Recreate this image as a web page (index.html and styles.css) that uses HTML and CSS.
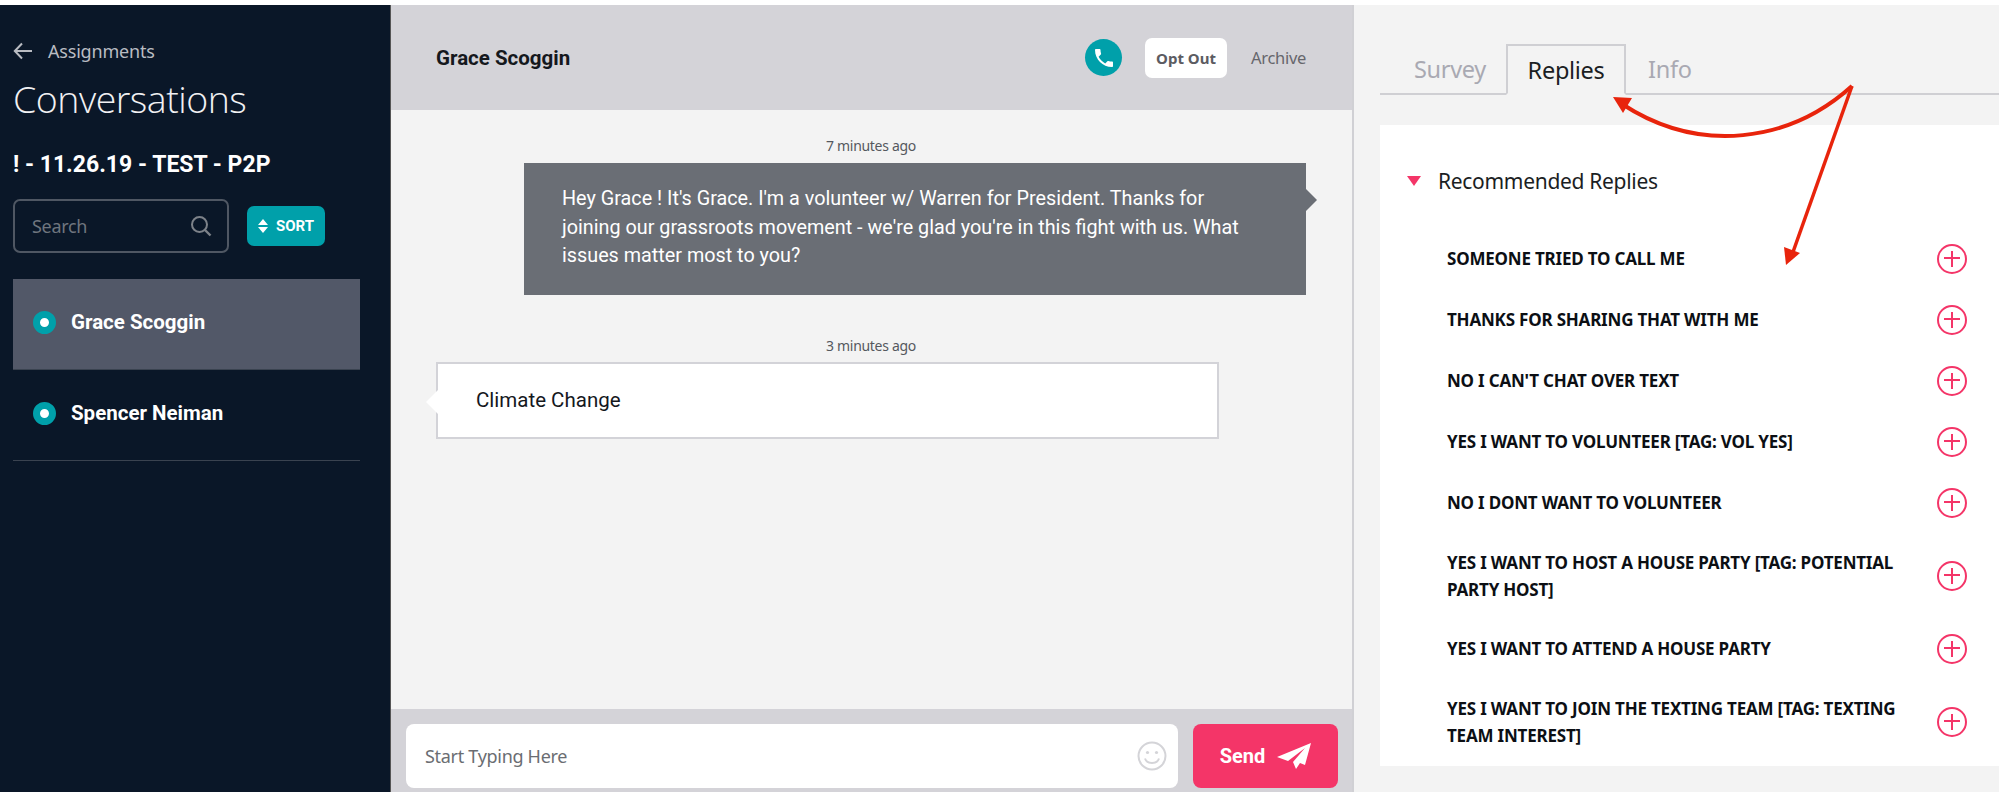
FILE: index.html
```html
<!DOCTYPE html>
<html lang="en">
<head>
    <meta charset="UTF-8">
    <title>Conversations</title>
    <link rel="stylesheet" href="styles.css">
</head>
<body>

<div class="app">
    <aside class="sidebar">
        <a class="back-link">
            <svg class="back-icon" viewBox="0 0 20 18"><path d="M19 9H2M9 1.500L1.800 9L9 16.500" fill="none" stroke="#b9bcc2" stroke-width="2"/></svg>
            <span>Assignments</span>
        </a>
        <h1 class="page-title">Conversations</h1>
        <h2 class="campaign">! - 11.26.19 - TEST - P2P</h2>
        <div class="search-row">
            <div class="search-box">
                <span>Search</span>
                <svg class="search-icon" viewBox="0 0 22 22"><circle cx="9.500" cy="9.500" r="7.500" fill="none" stroke="#7d8289" stroke-width="2"/><path d="M15 15l5.500 5.500" stroke="#7d8289" stroke-width="2.400"/></svg>
            </div>
            <button class="sort-btn">
                <svg class="sort-icon" viewBox="0 0 10 14"><path d="M5 0l5 6H0zM5 14L0 8h10z" fill="#fff"/></svg>
                SORT
            </button>
        </div>
        <div class="contact active"><span class="dot"></span>Grace Scoggin</div>
        <div class="contact"><span class="dot"></span>Spencer Neiman</div>
    </aside>

    <main class="chat">
        <header class="chat-header">
            <div class="chat-name">Grace Scoggin</div>
            <div class="call-btn">
                <svg viewBox="0 0 24 24" class="call-icon"><path d="M6.620 10.790c1.440 2.830 3.760 5.140 6.590 6.590l2.200-2.200c.27-.27.67-.36 1.020-.24 1.120.37 2.330.57 3.570.57.55 0 1 .45 1 1V20c0 .55-.45 1-1 1-9.390 0-17-7.610-17-17 0-.55.45-1 1-1h3.500c.55 0 1 .45 1 1 0 1.250.2 2.450.57 3.570.11.35.03.74-.25 1.020l-2.200 2.200z" fill="#fff"/></svg>
            </div>
            <button class="opt-out">Opt Out</button>
            <span class="archive">Archive</span>
        </header>

        <div class="messages">
            <div class="timestamp">7 minutes ago</div>
            <div class="bubble outgoing">Hey Grace ! It's Grace. I'm a volunteer w/ Warren for President. Thanks for joining our grassroots movement - we're glad you're in this fight with us. What issues matter most to you?</div>
            <div class="timestamp second">3 minutes ago</div>
            <div class="bubble incoming">Climate Change</div>
        </div>

        <footer class="composer">
            <div class="message-input">
                <span>Start Typing Here</span>
                <svg class="smiley" viewBox="0 0 30 30"><circle cx="15" cy="15" r="13.500" fill="none" stroke="#d4d4d8" stroke-width="2"/><circle cx="10.500" cy="11.500" r="1.600" fill="#d4d4d8"/><circle cx="19.500" cy="11.500" r="1.600" fill="#d4d4d8"/><path d="M8 17.500c2 6 12 6 14 0" fill="none" stroke="#d4d4d8" stroke-width="2"/></svg>
            </div>
            <button class="send-btn">
                Send
                <svg class="plane" viewBox="0 0 34 26"><path d="M34 0L0 14l11 4L28 5 16 19l3 7 4-6 5 2z" fill="#fff"/></svg>
            </button>
        </footer>
    </main>

    <section class="panel">
        <nav class="tabs">
            <span class="tab">Survey</span>
            <span class="tab current">Replies</span>
            <span class="tab">Info</span>
        </nav>
        <div class="replies">
            <div class="replies-head"><span class="caret"></span>Recommended Replies</div>
            <div class="reply"><span>SOMEONE TRIED TO CALL ME</span><span class="plus"></span></div>
            <div class="reply"><span>THANKS FOR SHARING THAT WITH ME</span><span class="plus"></span></div>
            <div class="reply"><span>NO I CAN'T CHAT OVER TEXT</span><span class="plus"></span></div>
            <div class="reply"><span>YES I WANT TO VOLUNTEER [TAG: VOL YES]</span><span class="plus"></span></div>
            <div class="reply"><span>NO I DONT WANT TO VOLUNTEER</span><span class="plus"></span></div>
            <div class="reply"><span>YES I WANT TO HOST A HOUSE PARTY [TAG: POTENTIAL PARTY HOST]</span><span class="plus"></span></div>
            <div class="reply"><span>YES I WANT TO ATTEND A HOUSE PARTY</span><span class="plus"></span></div>
            <div class="reply"><span>YES I WANT TO JOIN THE TEXTING TEAM [TAG: TEXTING TEAM INTEREST]</span><span class="plus"></span></div>
        </div>
    </section>
</div>

<!-- red annotation arrows drawn over the screenshot -->
<svg class="annotation" viewBox="0 0 1999 792">
    <path d="M1852 86C1790 142 1700 155 1622 104" fill="none" stroke="#e8240c" stroke-width="4"/>
    <path d="M1852 86L1793 252" fill="none" stroke="#e8240c" stroke-width="3.5"/>
    <path d="M1613 97L1632 98L1623 113z" fill="#e8240c"/>
    <path d="M1786 265L1784 247L1800 253z" fill="#e8240c"/>
</svg>

</body>
</html>
```

FILE: styles.css
```css
* {
    box-sizing: border-box;
}
body {
    margin: 0;
    padding-top: 5px;
    background-color: white;
    font-family: "Noto Sans", Arial, sans-serif;
    overflow: hidden;
}
button {
    border: none;
    font-family: inherit;
}
.app {
    display: flex;
    height: 787px;
}

/* left column */
.sidebar {
    width: 390px;
    flex: none;
    padding: 32px 30px 0 13px;
    background-color: #0a1728;
    color: white;
}
.back-link {
    display: flex;
    align-items: center;
    gap: 15px;
    height: 28px;
    color: #b9bcc2;
    font-size: 18px;
    letter-spacing: -0.2px;
}
.back-icon {
    width: 20px;
    height: 18px;
}
.page-title {
    margin: 9px 0 0;
    height: 50px;
    font-size: 37.5px;
    line-height: 50px;
    font-weight: 300;
    font-family: "Open Sans", sans-serif;
    letter-spacing: -0.5px;
    color: #f1f1f3;
}
.campaign {
    margin: 27px 0 0;
    font-family: Roboto, sans-serif;
    font-size: 23px;
    line-height: 28px;
    font-weight: 700;
}
.search-row {
    display: flex;
    align-items: center;
    gap: 18px;
    margin-top: 20px;
}
.search-box {
    display: flex;
    align-items: center;
    justify-content: space-between;
    width: 216px;
    height: 54px;
    padding: 0 15px 0 17px;
    border: 2px solid #4f5763;
    border-radius: 7px;
    color: #6f757e;
    font-size: 18px;
    letter-spacing: -0.3px;
}
.search-icon {
    width: 22px;
    height: 22px;
}
.sort-btn {
    display: flex;
    align-items: center;
    gap: 8px;
    width: 78px;
    height: 40px;
    padding: 0 0 0 11px;
    border-radius: 7px;
    background-color: #00a0aa;
    color: white;
    font-family: Roboto, sans-serif;
    font-size: 15px;
    font-weight: 700;
}
.sort-icon {
    width: 10px;
    height: 14px;
}
.contact {
    display: flex;
    align-items: flex-start;
    height: 91px;
    padding: 32px 0 0 20px;
    border-bottom: 1px solid #3a4350;
    font-family: Roboto, sans-serif;
    font-size: 20.5px;
    line-height: 22px;
    font-weight: 700;
}
.contact.active {
    margin-top: 26px;
    background-color: #525868;
}
.dot {
    width: 23px;
    height: 23px;
    margin-right: 15px;
    border: 7px solid #00a0aa;
    border-radius: 50%;
    background-color: white;
}

/* middle column */
.chat {
    display: flex;
    flex-direction: column;
    width: 964px;
    flex: none;
    border-left: 1px solid #555;
    border-right: 2px solid #d0d0d4;
    background-color: #f3f3f3;
}
.chat-header {
    display: flex;
    align-items: center;
    height: 105px;
    padding: 0 46px 0 45px;
    background-color: #d4d3d8;
}
.chat-name {
    flex: 1;
    font-family: Roboto, sans-serif;
    font-size: 20.5px;
    font-weight: 700;
    color: #15181d;
}
.call-btn {
    display: flex;
    align-items: center;
    justify-content: center;
    width: 37px;
    height: 37px;
    border-radius: 50%;
    background-color: #00a0aa;
}
.call-icon {
    width: 24px;
    height: 24px;
}
.opt-out {
    width: 82px;
    height: 40px;
    margin: 0 24px 0 23px;
    border-radius: 7px;
    background-color: white;
    color: #5c5c62;
    font-size: 15px;
    font-weight: 700;
}
.archive {
    color: #66666c;
    font-size: 16.5px;
    letter-spacing: -0.3px;
}
.messages {
    flex: 1;
    display: flex;
    flex-direction: column;
    padding: 26px 46px 0 45px;
}
.timestamp {
    height: 20px;
    margin-bottom: 7px;
    text-align: center;
    color: #55585e;
    font-size: 14px;
    line-height: 20px;
    letter-spacing: -0.3px;
}
.timestamp.second {
    margin: 41px 0 6px;
}
.bubble {
    position: relative;
    font-family: Roboto, sans-serif;
    line-height: 28.5px;
}
.bubble.outgoing {
    align-self: flex-end;
    width: 782px;
    height: 132px;
    padding: 22px 41px 0 38px;
    background-color: #6a6e75;
    color: white;
    font-size: 19.8px;
}
.bubble.outgoing::after {
    content: "";
    position: absolute;
    top: 26px;
    right: -11px;
    width: 11px;
    height: 22px;
    background-color: #6a6e75;
    clip-path: polygon(0 0, 100% 50%, 0 100%);
}
.bubble.incoming {
    width: 783px;
    height: 77px;
    padding: 22px 38px 0;
    border: 2px solid #d3d3d8;
    background-color: white;
    color: #15181d;
    font-size: 20.5px;
}
.bubble.incoming::before {
    content: "";
    position: absolute;
    top: 26px;
    left: -12px;
    width: 12px;
    height: 24px;
    background-color: white;
    clip-path: polygon(100% 0, 0 50%, 100% 100%);
}
.composer {
    display: flex;
    gap: 15px;
    height: 83px;
    padding: 15px 12px 0 15px;
    background-color: #d4d3d8;
}
.message-input {
    display: flex;
    align-items: center;
    justify-content: space-between;
    width: 772px;
    height: 64px;
    padding: 0 11px 0 19px;
    border-radius: 8px;
    background-color: white;
    color: #6a6d72;
    font-size: 18px;
    letter-spacing: -0.3px;
}
.smiley {
    width: 30px;
    height: 30px;
}
.send-btn {
    display: flex;
    align-items: center;
    justify-content: center;
    gap: 12px;
    width: 145px;
    height: 64px;
    border-radius: 8px;
    background-color: #f43568;
    color: white;
    font-family: Roboto, sans-serif;
    font-size: 20px;
    font-weight: 700;
}
.plane {
    width: 34px;
    height: 26px;
}

/* right column */
.panel {
    flex: 1;
    padding: 39px 0 0 26px;
    background-color: #f3f3f3;
}
.tabs {
    display: flex;
    height: 51px;
    padding-left: 20px;
    border-bottom: 2px solid #cfcfd3;
}
.tab {
    padding: 0 14px;
    height: 51px;
    color: #a9a9b2;
    font-size: 23.5px;
    line-height: 50px;
    letter-spacing: -0.3px;
}
.tab.current {
    width: 120px;
    margin: 0 8px 0 6px;
    padding: 0;
    text-align: center;
    border: 2px solid #cfcfd3;
    border-bottom: 2px solid #f3f3f3;
    color: #1b1e23;
    line-height: 48px;
}
.replies {
    height: 641px;
    margin-top: 30px;
    padding: 35px 32px 0 27px;
    background-color: white;
}
.replies-head {
    display: flex;
    align-items: center;
    height: 42px;
    margin-bottom: 26px;
    color: #1b1e23;
    font-size: 21px;
    letter-spacing: -0.3px;
}
.caret {
    width: 0;
    height: 0;
    margin-right: 17px;
    border-left: 7.5px solid transparent;
    border-right: 7.5px solid transparent;
    border-top: 10px solid #f43568;
}
.reply {
    display: flex;
    align-items: center;
    justify-content: space-between;
    min-height: 61px;
    padding: 15.5px 0 15.5px 40px;
    color: #0c0f14;
    font-size: 17px;
    line-height: 27px;
    font-weight: 700;
    letter-spacing: -0.2px;
}
.reply > span:first-child {
    width: 470px;
}
.plus {
    position: relative;
    width: 30px;
    height: 30px;
    flex: none;
    border: 2.5px solid #f43568;
    border-radius: 50%;
}
.plus::before,
.plus::after {
    content: "";
    position: absolute;
    background-color: #f43568;
}
.plus::before {
    left: 5px;
    right: 5px;
    top: 11.5px;
    height: 2px;
}
.plus::after {
    top: 5px;
    bottom: 5px;
    left: 11.5px;
    width: 2px;
}

/* annotation layer */
.annotation {
    position: absolute;
    left: 0;
    top: 0;
    width: 1999px;
    height: 792px;
    pointer-events: none;
}
```
